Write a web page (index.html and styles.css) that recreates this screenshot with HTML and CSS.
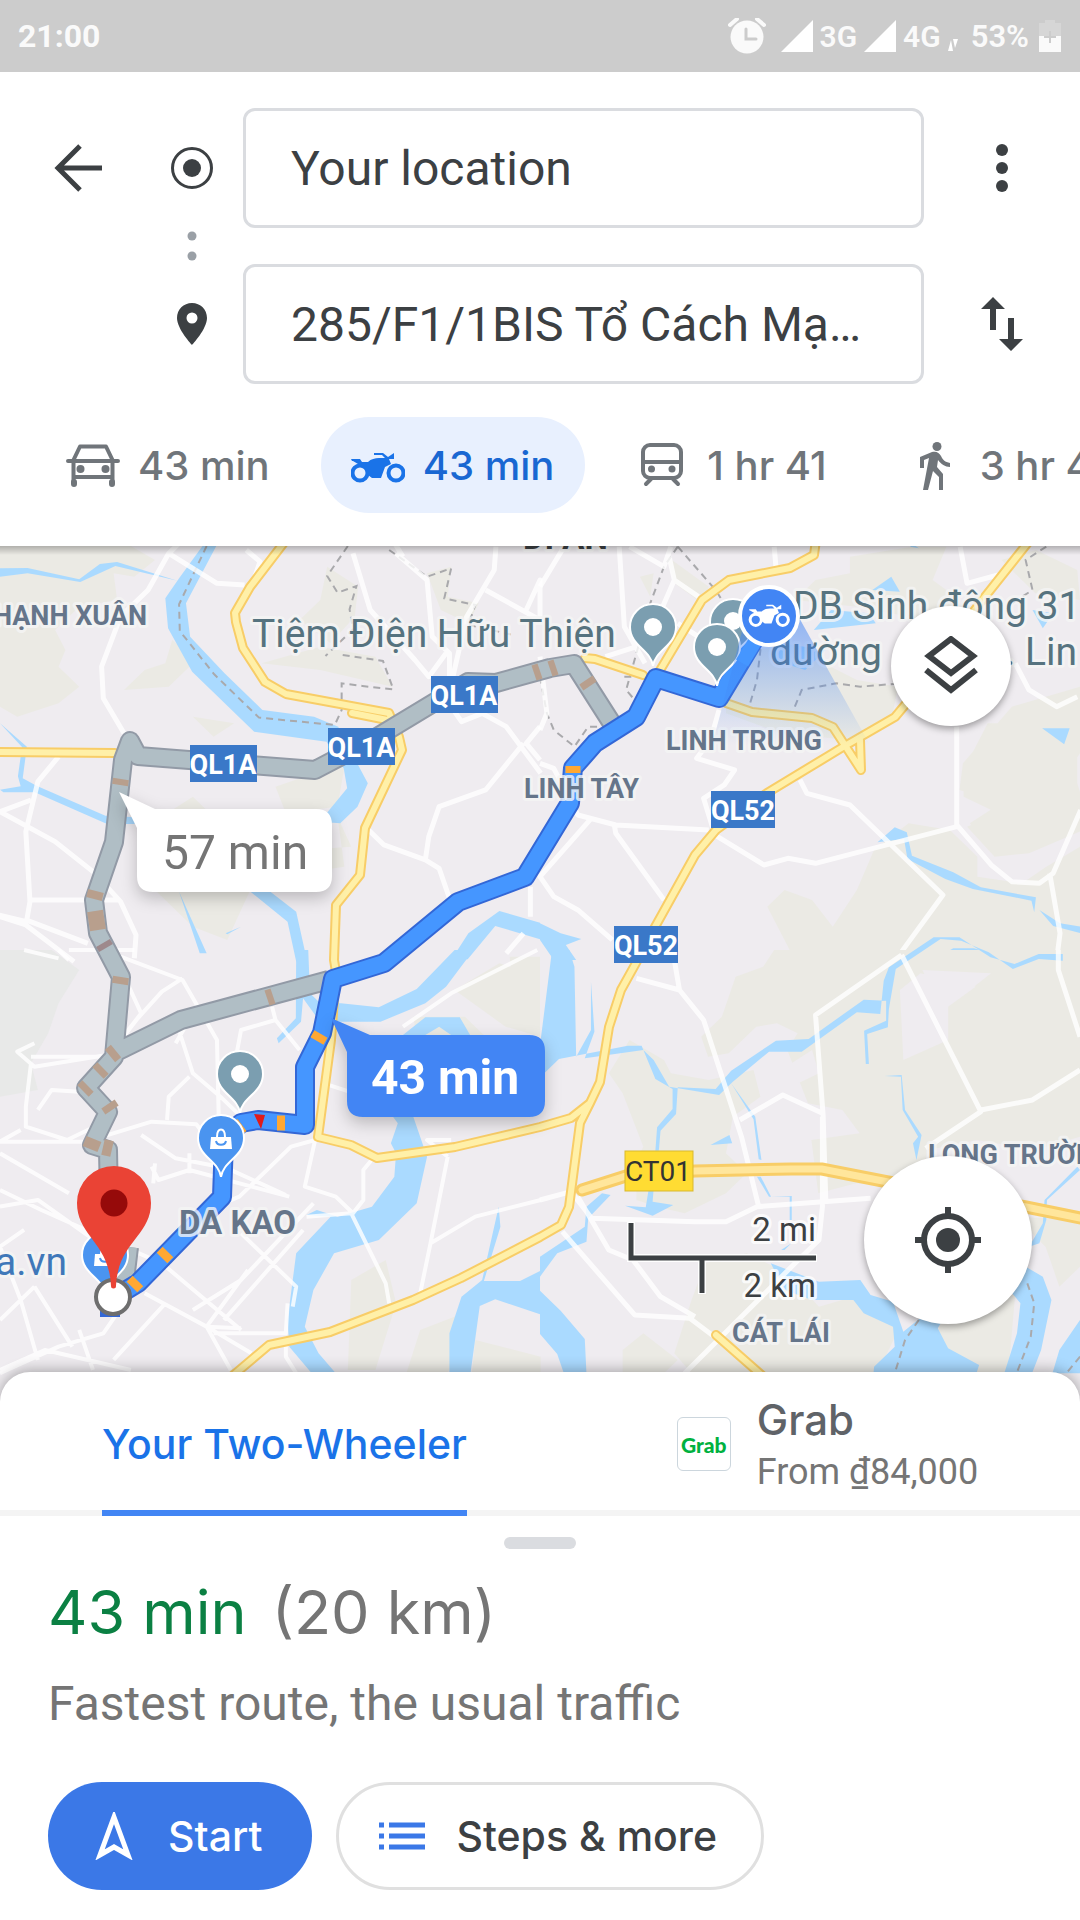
FILE: index.html
```html
<!DOCTYPE html>
<html lang="en">
<head>
<meta charset="utf-8">
<meta name="viewport" content="width=device-width, initial-scale=1">
<title>Directions</title>
<link rel="stylesheet" href="styles.css">
</head>
<body>
<div class="status">
  <span>21:00</span>
  <div class="status-icons">
    <svg class="alarm" width="38" height="36" viewBox="0 0 38 36" aria-hidden="true"><circle cx="19" cy="19" r="16.500" fill="#fafafa"/><path d="M2 7l7-6M36 7l-7-6" stroke="#fafafa" stroke-width="4" stroke-linecap="round"/><path d="M18 11v10h10" fill="none" stroke="#ccc" stroke-width="3" stroke-linecap="round"/></svg>
    <svg width="32" height="32" viewBox="0 0 32 32" aria-hidden="true"><path d="M0 32L32 0v32z" fill="#fff"/></svg>
    <span class="net">3G</span>
    <svg width="32" height="32" viewBox="0 0 32 32" aria-hidden="true"><path d="M0 32L32 0v32z" fill="#fff"/></svg>
    <span class="net">4G</span>
    <svg class="data" width="10" height="32" viewBox="0 0 10 32" aria-hidden="true"><path d="M0 31l3-11 2 11zM5 19h5l-3 9z" fill="#fff"/></svg>
    <span class="battery-level">53%</span>
    <svg width="22" height="32" viewBox="0 0 22 32" aria-hidden="true"><path d="M0 16V3h6V0h10v3h6v13z" fill="#d6d6d6"/><path d="M0 16h22v16H0z" fill="#fafafa"/><path d="M11 11v12M5 17h12" stroke="#ccc" stroke-width="2"/></svg>
  </div>
</div>

<header class="directions">
  <form class="waypoints">
    <button type="button" class="icon-button" aria-label="Back"><svg width="48" height="48" viewBox="0 0 48 48"><path d="M26 2L4 24l22 22M4 24h44" fill="none" stroke="#3c4043" stroke-width="5"/></svg></button>
    <svg class="mark" width="42" height="42" viewBox="0 0 42 42" aria-hidden="true"><circle cx="21" cy="21" r="19.500" fill="none" stroke="#3c4043" stroke-width="3"/><circle cx="21" cy="21" r="9" fill="#3c4043"/></svg>
    <input class="field" type="text" aria-label="Start" value="Your location">
    <button type="button" class="icon-button" aria-label="More options"><svg width="12" height="48" viewBox="0 0 12 48"><g fill="#3c4043"><circle cx="6" cy="6" r="6"/><circle cx="6" cy="24" r="6"/><circle cx="6" cy="42" r="6"/></g></svg></button>
    <svg class="dots" width="10" height="30" viewBox="0 0 10 30" aria-hidden="true"><g fill="#9aa0a6"><circle cx="5" cy="5" r="4.500"/><circle cx="5" cy="25" r="4.500"/></g></svg>
    <svg class="mark end" width="30" height="42" viewBox="0 0 30 42" aria-hidden="true"><path fill-rule="evenodd" fill="#3c4043" d="M15 0C6.500 0 0 6.500 0 15c0 11 15 27 15 27s15-16 15-27C30 6.500 23.500 0 15 0zm0 9.500a5.500 5.500 0 1 1 0 11 5.500 5.500 0 0 1 0-11z"/></svg>
    <input class="field destination" type="text" aria-label="Destination" value="285/F1/1BIS Tổ Cách Mạ…">
    <button type="button" class="icon-button swap" aria-label="Swap start and destination"><svg width="42" height="54" viewBox="0 0 42 54"><path d="M12 33V8M30 21v25" stroke="#3c4043" stroke-width="6"/><path d="M0 12L12 0l12 12zM18 42l12 12 12-12z" fill="#3c4043"/></svg></button>
  </form>
  <nav class="modes">
    <button type="button" class="mode"><svg width="54" height="54" viewBox="0 0 54 54" aria-hidden="true"><g fill="none" stroke="#70757a" stroke-width="4" stroke-linejoin="round" stroke-linecap="round"><path d="M2 23h50M7 23L14 8.500h26L47 23M7.500 23v22M46.500 23v22" /><path d="M8 39h38"/><path d="M8 44v2M46 44v2" stroke-width="6"/></g><circle cx="14.500" cy="31" r="4" fill="#70757a"/><circle cx="39.500" cy="31" r="4" fill="#70757a"/></svg>43 min</button>
    <button type="button" class="mode selected" aria-pressed="true"><svg width="54" height="54" viewBox="0 -14 54 54" aria-hidden="true"><use href="#moto"/></svg>43 min</button>
    <button type="button" class="mode"><svg width="54" height="54" viewBox="0 0 54 54" aria-hidden="true"><g fill="none" stroke="#70757a" stroke-width="4" stroke-linecap="round"><rect x="8" y="7" width="38" height="33" rx="7"/><path d="M8 24h38M16 41l-5 5M38 41l5 5"/></g><circle cx="16.500" cy="31" r="3.500" fill="#70757a"/><circle cx="37" cy="31" r="3.500" fill="#70757a"/></svg>1 hr 41</button>
    <button type="button" class="mode"><svg width="54" height="54" viewBox="0 0 54 54" aria-hidden="true"><circle cx="29" cy="8.500" r="4.500" fill="#70757a"/><path fill="#70757a" d="M24 14l-12 5v11h4v-8l5-2-6 32h5l5-19 6 6v13h4V36l-6-7 1-7c3 4 7 7 12 7v-4c-5-1-7-3-9-7-2-3-4-5-9-4z"/></svg>3 hr 45</button>
  </nav>
</header>

<main class="map">
  <svg class="canvas" viewBox="0 546 1080 860" preserveAspectRatio="xMidYMin slice" role="img" aria-label="Route map">
    <defs>
      <g id="moto" fill="currentColor"><g fill="none" stroke="currentColor" stroke-width="4"><circle cx="9" cy="21" r="7.500"/><circle cx="45" cy="21" r="7.500"/></g><path d="M0 7h9l2 3h6c3-3 7-4 11-4h6l-3-3h-8V1h9l5 4 6-4v6h-5l2 5-6 3-4 11h-9l-4-3-3-7-7-4-5-3H1z"/></g>
      <path id="pin" stroke="#fff" stroke-width="2" d="M0 38C-2 22-23 18-23-1a23 23 0 0 1 46 0C23 18 2 22 0 38z"/>
      <g id="bag"><path fill="#fff" d="M-10-2h20l1 12h-22z"/><path d="M-4-2c0-10 8-10 8 0" fill="none" stroke="#fff" stroke-width="2"/><path d="M-5 2c1 5 9 5 10 0" fill="none" stroke="#4a94f0" stroke-width="2"/></g>
      <linearGradient id="beam" x1="0" y1="0" x2="0" y2="1"><stop offset="0" stop-color="#4285f4" stop-opacity=".6"/><stop offset=".5" stop-color="#4285f4" stop-opacity=".3"/><stop offset="1" stop-color="#4285f4" stop-opacity="0"/></linearGradient>
      <linearGradient id="top-shade" x1="0" y1="0" x2="0" y2="1"><stop offset="0" stop-opacity=".25"/><stop offset="1" stop-opacity="0"/></linearGradient>
    </defs>
    <rect y="540" width="1080" height="880" fill="#efecf0"/>

    <!-- north west -->
    <g transform="translate(0 540) scale(.3444 .3333)">
      <path class="land" d="M0 0h350l100 60-60 50-60-10 10 80-110 20-70 70 30 60-20 50 60 60-60 50-120 40-50-30zM500 300l70 60-80 80-130 10 60-60 60-20zM950 80l-20 100-60 60 90 70 70-80 10-90zM760 370l170 20 210 50-50-90-160-30zM1240 100l70-20-10 90 90 20-30 60-80-40zM560 530l120 20-60 40zM800 740l140-50 60-10-20 120-150 20zM500 810l60-40 60 60 60-20 120 10-20 60-280 40zM400 1000l60-40 560-40-40-90 20 150-260 40-80 180-100-40z"/>
      <path class="water" d="M0 85l80-1 150 34 60-46 50-6 175 56-180-44-102 48-153-26-80 10zM588 18h40l-88 172 12 100 100 110 110 110 150 20 70 30 50 100 36 70-30 70-50 50-60-5 80-100-10-60-50-80-210-30-60-60-120-120-70-130-8-90 40-60zM0 550l78 70-12 95 40 22 200 90 90 5-5 20-80 0-210-95-91 0-10-8 60-10-8-30 12-88zM715 1045l70 10 75 60 32 150h-32l-25-120zM520 1055l80 185h-20zM655 1180l45-20-40 23zM1310 1260l50-80 90-67 118 35v50l-130-40-80 100z"/>
      <path class="dash" d="M600 18l-80 175 2 80 100 130 130 130 220 22 20-45v-80l60 8 90 10-30-85-130-20M1010 18l-60 90 30 50 55-20-20 70 10 60-80 80M1130 30l110 80 70-25-20 90 90 20-20 60 130 30"/>
      <path class="road" d="M530 0l-40 40-60 110-80 80-55 150 5 95 60 105M490 40l140 90 80 5M715 30l40 35-20 60M1025 40l50 170 130 150 40 50 50-70M1150 40l90 80 15 170 50 50 0 70M1440 20l-5 70-80 140-40 180M1140 0l30 50M1410 150l158 90 0-120-40 90M1310 500l30 45 60-25 70 40 100 140M1520 610l-110 140-135 50-30 90-10 70-120-45-50-50M1235 960l40 25 30 90M170 650l-60 75-35 150 12 210-10 60-80-20M0 815l90-35M0 815l160 90 110 90 80 90 45 100-5 70M87 1080h260M75 1140l180 70M0 1130l75 25 140 110M1568 560l-40 50 40 50M1540 1040v90M1520 1180l-50 60"/>
    </g>
    <!-- north east -->
    <g transform="translate(540 540) scale(.3444 .3333)">
      <path class="land" d="M900 50l180-30h100l-40 100 80 60-100 60-200-40-180-20 60-60 100-20zM290 110l40-10-10 70zM370 50l120 90-20 50-80-60zM540 380l40-50 150-10 190 100 120 20-20 100-120 60-200-20-160-60zM1370 500l198-60v200l-40 60 20 90-60 100-120 0-60 40-60-80 90-60-120-40 10-80zM1300 550h260v180l40 130-180 80-100 10-80-90 90-40-100-50v-80zM1568 920v340H740l-80-160 50-50 80 30 60 80 70-110 50-120 100-80 120 20 80 80v60l130 20 70-50z"/>
      <path class="land" d="M1340 60l100-30 120 60 8 90-130-20z"/>
      <path class="water" d="M965 150l55-40 25 45zM795 270l50-60 110 10 20 30zM1430 210l60 10-30 45zM1080 10l20 15-25-5zM700 310l130 20-60 60-90-30zM1458 565h80l-16 48zM980 907l50-45 35 15 15 70 120 50 80 45 160 30-5 45-8-35-170-35-80-30-110-60-10-60zM1450 1110l60 40 60 10v20l-80-22zM0 1150l60 30 60 17-45 18 30 45H40L0 1200zM1140 1260l60-35h60l120 35z"/>
      <path class="dash" d="M400 20l-40 60-40 110-40 150-30 110 50 60M400 20l110 130 90 150 40 30-10 90-20 70M0 410l20 110 20 50 60 50 40-60 70 0M740 500l20-50 100-20 70 10 120-10M1470 20l-60 40 20 90-60 40M300 410l-60 0"/>
      <path class="road" d="M70 20L0 140M230 20l15 240 60 110M260 20l100 60 20-60M375 50l15 70 70 50M390 120l-80 190-120 40M400 250l60 40M680 20l5 60M1220 20l20 110 90-25M0 670l40 15 70 140 110 30 270 15M145 840L0 1010l40 60 70 40 100 90M215 850l5 30 140 200M500 880l150 95 70-20 80 15 410-110 0-300M755 720l20 40 125 35 270 270-120 170-50 60M1210 855l100 120 60 50 80 5 40-30 80-190M1480 1000l30 180-10 80M520 510l-25 90-40 55 110 35-30 45-60 40 30 100M1380 370l40 80 80 50 60-30M0 350l20 170-20 50"/>
    </g>
    <!-- south west -->
    <g transform="translate(0 950) scale(.3444 .3333)">
      <path fill="#e8e9e8" d="M0 0h150l80 60-60 100-30 90-50 90 20 80-110 20z"/>
      <path class="land" d="M1320 120l130-80 118 40v180l-100-30zM1480 20h88v130l-80-20zM1020 990l100-60 30 130-60 200h-80zM1220 1140l150-60-70 190h-120zM1380 1170l190 50v50h-200zM1200 200l150 0 60 60h-200z"/>
      <path class="water" d="M860 0h35l5 130 30 30 60 0 110 12 110-55 110-117h55l-80 110-60 50-130 55h-120l-70-20-35-50-6 70-65 65-5-15 55-60zM1170 255l65-53h100l30 53h-55l-35-25-40 25zM1130 500h70l40 120-30 140-110 110-130 40-60 110-25 110 40 80 50 60h-70l-65-80-5-80 25-200 100-110-70-5 30-15 60 20 100-30 65-90 5-70-15-30 20-60-50-70zM1448 770l5 60-48 163h105l58-30v130l-130-45-45 20-28 210h-60V1150l35-110 60-50z"/>
      <path class="road street" d="M100 280l-50 25 50 45 210-35M90 320l200 0M70 0l100 25M170 0l30 30M350 20l180 70 100 180 5 230M530 85l-60 40-70 80-90 120M370 100l40 90-60 80M510 210l50 160 80 70 60 60M510 280l45-80M790 170l10 40-100 30-20 110M800 210l70 90M550 380l-60 60-5 70M90 340l-15 130 0 60 120 40 100-50M60 540L0 575h250l190-60 130 8 60 80M110 480l40-60 80 5M200 0l190 0M410 555l100 70 150 30 170 80M440 650l20 40 90-30 290 80M550 610l0 60M450 640l-5 60M0 610l200 120M0 720l120 60 130 60 220 100 230 200M70 840L0 890l60 160 50 180M0 770l110-20 150 110M100 1010L0 1110M100 1010l110 180M420 1030l180 100 130 80M560 1080l140-90 210-230M480 1060L330 1230M400 1000l-100 150-130 40-170 80M0 1260l130-60 250 60M230 1140l40 120M720 960L600 1130l70 130M600 1130l100 5M620 1150h210l5-90M915 570l-30 140 90 30 50 50 30-40v-90l40-50M890 800l130-10 100 210 10 60M880 840L650 1110M1300 620l-50 260 130-80 190-50M1300 620l-60-50 70 0M1250 880l-30 150M830 1160v60l30 50M915 570l-70 20-150 150-140 60M1560 0l-250 130-140 100M940 400l90 30M700 850l160 160-10 60"/>
    </g>
    <!-- south east -->
    <g transform="translate(540 950) scale(.3444 .3333)">
      <path class="land" d="M680 0h888v560l-130 40-170-30-140 30-30 110-180-10-110 30-20-160 140-20-50-70-100-20-60-160 30-50-60-30-60 10-80 80-60 10-20-60 60-60 40-120 80-30zM200 370l60-100 100 60 20 40 110 20 130-30 20 80-80 60-20 110 60 60-60 60-120 60-80-20-60-20v-120l20-40-60-160zM480 940l120-30 120 60 90 100 100-30 130 100-60 130H440l-50-60 50-160zM240 1200l60-50 100 80-40 40H240zM1380 800l188 10v140l-60 60-40-120zM1160 1120l220-90-20 240H1150z"/>
      <path fill="#efecf0" d="M1045 120l60-50 160 40-80 60v100l-130 60zM1110 60l200 10-50 40-120 10zM730 340l60-40 20 70-60 30z"/>
      <path class="water" d="M35 0h50l15 50 5 270 43-80v-145l10 150-28 80 170-25 30 30 45 80 145 25 40-40 105-90h95l160-118 68 5 10-100 15-40 130-90h75l90 60 70 20 70-30h70v20l-70-5-75 30-70-50-80-35-60-5-130 90-20 120-3 55-60 20 5 90h-9l-5-100 64-30v-60l-65-3-160 118-95 5-130 90-45 55-110-5-5 80-45 50-5 60h-10l5-70 45-55 0-60-50-30-40-100-40 0-200 40-50 50-50 20 40-70zM555 400l70 100 18 130-8-2-15-120zM495 585l55-30 8 25zM320 690h12l-5 65 60 10-60 32-80-30 60 5zM180 730l25 5-65 70-5 70-85 35-50 70v-60l130-90 5-60zM630 680l35 60h60v70h6v-72l-60 2-30-60zM1000 378l50-3 10 105 48 75-15 75-10-50 15-20-45-80-5-100zM0 1022l60 60 70 85 5 105H70l-20-60-50-60zM670 940l140 55 120-5 30 45 65 20 30 90 60-50 80-30-40 70 30 60 90 50-20 65H965l5-60 60-60-5-60-85-40-30-40-120 0-80-30zM700 900l30-20-20 20zM1410 950l50 30 25 70-30 150-30 80h-80l40-130 10-90-40-50zM1560 650l-95 100-5 70-40 70 30-10 20-70 2-60 96-90zM1568 1110l-60 90-20 70h80z"/>
      <path class="dash" d="M1100 1110l-40 60-30 100M1415 1000l20 60-10 100-45 120M1568 1220l-40 50"/>
      <path class="road" d="M280 85l125 35-15-90M405 120l70 90 110 350 50 210M580 510l125-75 115 55M1050 15l-250 180 22 300 8 260M1050 15l230 470-160 110M1280 480l150-30 138-90M1505 0l0 60 63 200M820 500v270l-10 100-60 60-330 340M0 750l90-25 60 80 300 10h90l90-45 330-25M110 740l90 160 70 30 80 110 100 60M65 845l210 250 160 10 90 70"/>
    </g>

    <path class="highway-edge" d="M286 540L250 587 235 613 236 622 243 648 265 682 286 694 389 713 399 737 402 750 365 828 360 875 336 905 334 960 336 972 331 1040 318 1137 351 1145 377 1158 455 1147 540 1127 571 1118 590 1103M352 713l35 7M0 752l115 1M1030 540L980 603 905 705 895 717 843 747 767 793 716 830 695 855 655 927 636 963 621 990 609 1027 600 1082 590 1103 580 1123 569 1207 561 1225 540 1237 461 1278 413 1300 330 1332 269 1345 230 1378M816 540l-2 15-24 13-61 12-27 20-43 72-5 10M585 658l10 1 48 16M726 703l26 9 60 6 21 9 28 43-1-30M716 1335l50 44"/>
    <path class="highway" d="M286 540L250 587 235 613 236 622 243 648 265 682 286 694 389 713 399 737 402 750 365 828 360 875 336 905 334 960 336 972 331 1040 318 1137 351 1145 377 1158 455 1147 540 1127 571 1118 590 1103M352 713l35 7M0 752l115 1M1030 540L980 603 905 705 895 717 843 747 767 793 716 830 695 855 655 927 636 963 621 990 609 1027 600 1082 590 1103 580 1123 569 1207 561 1225 540 1237 461 1278 413 1300 330 1332 269 1345 230 1378M816 540l-2 15-24 13-61 12-27 20-43 72-5 10M585 658l10 1 48 16M726 703l26 9 60 6 21 9 28 43-1-30M716 1335l50 44"/>
    <path fill="none" stroke="#f8cd67" stroke-width="13" stroke-linecap="round" d="M582 1190l44-14 69-5 96-2h31l66 13 138 25 54 11"/>
    <path fill="none" stroke="#ffe69c" stroke-width="7" stroke-linecap="round" d="M582 1190l44-14 69-5 96-2h31l66 13 138 25 54 11"/>

    <g fill="none" stroke-linejoin="round">
      <path stroke="#929aa6" stroke-width="20" d="M611 722L574 664 550 668 496 683 468 682 372 740 315 770 138 756 130 741 123 760 114 842 94 900 98 933 121 977 114 1057 86 1088 108 1112 92 1145 108 1150 109 1200M329 980L181 1020 114 1053M129 1247l-3 25-12 20"/>
      <path stroke="#b0bec5" stroke-width="16" d="M611 722L574 664 550 668 496 683 468 682 372 740 315 770 138 756 130 741 123 760 114 842 94 900 98 933 121 977 114 1057 86 1088 108 1112 92 1145 108 1150 109 1200M329 980L181 1020 114 1053M129 1247l-3 25-12 20"/>
      <path stroke="#b89f8d" stroke-width="16" d="M121 779l-1 6M96 891l-2 8M95 911l3 19M121 977l-1 7M267 998l6-2M116 1051l-6 5M103 1068l-5 5M88 1086l-5 5M108 1104l4 6M94 1139l-4 10M103 1147l9 2M586 680l4 6M534 673l6-2M550 669l6-2"/>
      <path stroke="#9e898c" stroke-width="16" d="M103 943l3 5"/>
      <path stroke="#3367d6" stroke-width="20" d="M769 615L719 698 656 678 636 717 595 743 573 768 570 803 525 877 458 902 384 963 333 979 322 1033 305 1067 305 1125 258 1120 241 1123 224 1140 222 1197 138 1283 110 1300v17"/>
      <path stroke="#4596ff" stroke-width="16" d="M769 615L719 698 656 678 636 717 595 743 573 768 570 803 525 877 458 902 384 963 333 979 322 1033 305 1067 305 1125 258 1120 241 1123 224 1140 222 1197 138 1283 110 1300"/>
      <path stroke="#ffa833" stroke-width="15" d="M573 766v7M321 1034l-4 7M277 1123h8M168 1252l-6 6M138 1281l-6 6M238 1128l4-3"/>
    </g>
    <path fill="#e01b1b" d="M254 1114l11 1-4 14z"/>

    <g class="shield" text-anchor="middle">
      <rect x="190" y="745" width="67" height="37"/><text x="223" y="774">QL1A</text>
      <rect x="328" y="728" width="67" height="37"/><text x="361" y="757">QL1A</text>
      <rect x="431" y="676" width="67" height="37"/><text x="464" y="705">QL1A</text>
      <rect x="711" y="791" width="64" height="37"/><text x="743" y="820">QL52</text>
      <rect x="614" y="926" width="64" height="37"/><text x="646" y="955">QL52</text>
    </g>
    <rect x="625" y="1151" width="68" height="40" fill="#ffdc33" stroke="#d9b92e"/>
    <text class="toll" x="658" y="1181" text-anchor="middle">CT01</text>

    <g class="district">
      <text x="147" y="625" text-anchor="end">THẠNH XUÂN</text>
      <text x="666" y="750">LINH TRUNG</text>
      <text x="524" y="798">LINH TÂY</text>
      <text x="928" y="1164">LONG TRƯỜNG</text>
      <text x="732" y="1342">CÁT LÁI</text>
      <text class="large" x="179" y="1234">DA KAO</text>
      <text class="large city" x="523" y="549">DĨ AN</text>
    </g>
    <g class="poi">
      <text x="252" y="647">Tiệm Điện Hữu Thiện</text>
      <text x="793" y="619">DB Sinh động 31</text>
      <text x="770" y="665">dường</text>
      <text x="1005" y="665">. Lin</text>
      <text class="shop" x="67" y="1275" text-anchor="end">a.vn</text>
    </g>

    <g fill="#7b9eb0">
      <use href="#pin" x="733" y="623"/><circle cx="733" cy="621" r="9" fill="#fff"/>
      <use href="#pin" x="717" y="648"/><circle cx="717" cy="647" r="9" fill="#fff"/>
      <use href="#pin" x="653" y="628"/><circle cx="653" cy="627" r="9" fill="#fff"/>
      <use href="#pin" x="240" y="1075"/><circle cx="240" cy="1074" r="9" fill="#fff"/>
    </g>
    <g fill="#4a94f0"><use href="#pin" x="221" y="1139"/><use href="#pin" x="105" y="1256"/></g>
    <use href="#bag" x="221" y="1139"/><use href="#bag" x="105" y="1256"/>
    <path fill="url(#beam)" d="M745 620L712 745h158L792 605z"/>
    <path fill="none" stroke="#4596ff" stroke-width="14" d="M765 625L742 663"/>
    <circle cx="769" cy="616" r="29" fill="#4285f4" stroke="#fff" stroke-width="4"/>
    <g color="#fff" transform="translate(749 604) scale(.750)"><use href="#moto"/></g>

    <circle cx="113" cy="1297" r="17" fill="#fff" stroke="#6e6e6e" stroke-width="4"/>
    <path fill="#ea4335" d="M111 1286c-2-44-34-50-34-83a37 37 0 0 1 74 0c0 33-33 39-35 83a2 2 0 0 1-5 0z"/>
    <circle cx="114" cy="1203" r="13.500" fill="#960a0a"/>

    <g class="callout"><path fill="#fff" d="M119 792l36 17h161q16 0 16 16v51q0 16-16 16H153q-16 0-16-16v-48z"/><text x="162" y="869" fill="#757575">57 min</text></g>
    <g class="callout"><path fill="#4285f4" d="M331 1018l39 17h159q16 0 16 16v50q0 16-16 16H363q-16 0-16-16v-49z"/><text class="strong" x="371" y="1094" fill="#fff">43 min</text></g>

    <path fill="none" stroke="#fff" stroke-width="8" d="M631 1222v36h186M702 1258v36"/>
    <path fill="none" stroke="#3c4043" stroke-width="5" d="M631 1223v35h185M702 1258v35"/>
    <g class="scale" text-anchor="end"><text x="816" y="1241">2 mi</text><text x="816" y="1297">2 km</text></g>
    <rect y="546" width="1080" height="9" fill="url(#top-shade)"/>
  </svg>
  <button type="button" class="round layers" aria-label="Layers"><svg width="54" height="60" viewBox="0 0 54 60"><path d="M27 3L49 20 27 37 5 20zM2 34l25 20 25-20" fill="none" stroke="#3c4043" stroke-width="6"/></svg></button>
  <button type="button" class="round locate" aria-label="Show my location"><svg width="66" height="66" viewBox="0 0 66 66"><circle cx="33" cy="33" r="24" fill="none" stroke="#3c4043" stroke-width="6"/><circle cx="33" cy="33" r="12" fill="#3c4043"/><path d="M33 0v9M33 57v9M0 33h9M57 33h9" stroke="#3c4043" stroke-width="6"/></svg></button>
</main>

<section class="sheet">
  <div class="options">
    <button type="button" class="option own"><span>Your Two-Wheeler</span></button>
    <button type="button" class="option ride">
      <span class="brand">Grab</span>
      <span class="offer"><span class="name">Grab</span><span class="price">From ₫84,000</span></span>
    </button>
  </div>
  <div class="handle"></div>
  <div class="summary">
    <h1><span class="time">43 min</span> (20 km)</h1>
    <p>Fastest route, the usual traffic</p>
    <div class="actions">
      <button type="button" class="action start"><svg width="40" height="48" viewBox="0 0 40 48" aria-hidden="true"><path d="M20 5L34 43l-14-8-14 8z" fill="none" stroke="#fff" stroke-width="5"/></svg>Start</button>
      <button type="button" class="action steps"><svg width="46" height="30" viewBox="0 0 46 30" aria-hidden="true"><path d="M10 4h36M10 15h36M10 26h36M0 4h5M0 15h5M0 26h5" stroke="#3b78e7" stroke-width="5"/></svg>Steps &amp; more</button>
    </div>
  </div>
</section>
</body>
</html>
```
FILE: styles.css
```css
* { box-sizing: border-box; }

body {
  margin: 0;
  min-height: 100vh;
  display: flex;
  flex-direction: column;
  background: #fff;
  color: #3c4043;
  font-family: Roboto, "Noto Sans", sans-serif;
  overflow-x: hidden;
}

button {
  margin: 0;
  padding: 0;
  border: 0;
  background: none;
  color: inherit;
  font: inherit;
}

svg { display: block; flex-shrink: 0; }

/* Status bar */
.status {
  display: flex;
  align-items: center;
  justify-content: space-between;
  height: 72px;
  padding: 0 19px 0 18px;
  background: #ccc;
  color: #fafafa;
  font-size: 32px;
  font-weight: 700;
}
.status-icons { display: flex; align-items: center; gap: 7px; }
.alarm { margin-right: 8px; }
.net { font-size: 30px; font-weight: 600; }
.data { margin-right: 6px; }
.battery-level { margin-right: 3px; font-size: 31px; font-weight: 600; }

/* Start and destination */
.directions { padding: 36px 0 33px; }
.waypoints {
  display: grid;
  grid-template-columns: 156px 72px 1fr 156px;
  grid-template-rows: 120px 36px 120px;
  align-items: center;
  justify-items: center;
}
.icon-button { display: grid; place-items: center; width: 72px; height: 72px; }
.dots { grid-area: 2 / 2; }
.end { grid-area: 3 / 2; }
.destination { grid-area: 3 / 3; }
.swap { grid-area: 3 / 4; }
.field {
  width: calc(100% - 15px);
  height: 120px;
  justify-self: end;
  padding: 0 45px;
  border: 3px solid #dadce0;
  border-radius: 12px;
  background: #fff;
  color: #3c4043;
  font: 400 48px Roboto, sans-serif;
  text-overflow: ellipsis;
}

/* Travel modes */
.modes {
  display: flex;
  gap: 20px;
  margin-top: 33px;
  padding-left: 36px;
  overflow: hidden;
}
.mode {
  display: flex;
  align-items: center;
  gap: 18px;
  flex-shrink: 0;
  height: 96px;
  padding: 0 31px 0 30px;
  border-radius: 48px;
  color: #70757a;
  font: 500 40px Inter, sans-serif;
}
.mode.selected { background: #e8f0fe; color: #1967d2; }
.mode.selected svg { color: #1a73e8; }

/* Map */
.map {
  position: relative;
  flex: 1;
  min-height: 480px;
  overflow: hidden;
  background: #efecf0;
}
.canvas { position: absolute; inset: 0; width: 100%; height: 100%; }
.canvas path { vector-effect: non-scaling-stroke; }
.land { fill: #ebeae4; }
.water { fill: #aadaff; }
.road { fill: none; stroke: #fff; stroke-width: 5px; stroke-opacity: .8; stroke-linejoin: round; }
.street { stroke-width: 4px; }
.dash { fill: none; stroke: #a9a9ac; stroke-width: 2px; stroke-dasharray: 7 5; }
.highway-edge { fill: none; stroke: #f8cd67; stroke-width: 10px; stroke-linejoin: round; stroke-linecap: round; }
.highway { fill: none; stroke: #fff0a8; stroke-width: 6px; stroke-linejoin: round; stroke-linecap: round; }
.shield rect { fill: #3a78c8; }
.shield text { fill: #fff; font-size: 27px; font-weight: 700; }
.toll { fill: #333; font-size: 28px; }
.district text, .poi text, .scale text {
  stroke: #f5f5f5;
  stroke-width: 6px;
  stroke-opacity: .8;
  stroke-linejoin: round;
  paint-order: stroke;
}
.district text { fill: #65758a; font-size: 27px; font-weight: 700; }
.district .large { font-size: 33px; }
.district .city { fill: #3c4043; }
.poi text { fill: #56737f; font-size: 39px; }
.poi .shop { fill: #3f78b9; }
.scale text { fill: #3c4043; font-size: 33px; stroke: #fff; }
.callout { filter: drop-shadow(0 6px 8px rgba(0, 0, 0, .22)); }
.callout text { font-size: 48px; }
.callout .strong { font-weight: 700; }

.round {
  position: absolute;
  display: grid;
  place-items: center;
  border-radius: 50%;
  background: #fff;
  box-shadow: 0 3px 7px rgba(0, 0, 0, .35);
}
.layers { top: 60px; right: 69px; width: 120px; height: 120px; }
.locate { right: 48px; bottom: 78px; width: 168px; height: 168px; }

/* Bottom sheet */
.sheet {
  position: relative;
  margin-top: -30px;
  border-radius: 30px 30px 0 0;
  background: #fff;
  box-shadow: 0 -2px 14px rgba(0, 0, 0, .3);
}
.options {
  display: grid;
  grid-template-columns: 569fr 511fr;
  height: 144px;
  border-bottom: 6px solid #f4f4f4;
}
.option {
  display: flex;
  align-items: center;
  justify-content: center;
  gap: 26px;
}
.own {
  height: 144px;
  color: #1a73e8;
  font: 500 41px Inter, sans-serif;
}
.own span {
  height: 144px;
  border-bottom: 6px solid #4285f4;
  border-radius: 4px 4px 0 0;
  line-height: 144px;
}
.ride { padding-left: 6px; }
.brand {
  display: grid;
  place-items: center;
  width: 54px;
  height: 54px;
  border: 1px solid #ccd6dd;
  border-radius: 6px;
  color: #00b140;
  font: 900 21px Lato, sans-serif;
}
.offer { display: grid; padding-top: 8px; text-align: left; }
.name { color: #5f6368; font: 500 42px/48px Inter, sans-serif; }
.price { color: #757575; font-size: 36px; line-height: 56px; }
.handle {
  width: 72px;
  height: 12px;
  margin: 21px auto 0;
  border-radius: 6px;
  background: #dadce0;
}
.summary { padding: 23px 48px 30px; color: #757575; }
h1 { margin: 0; font: 400 61px/80px Inter, sans-serif; }
.time { margin-right: 8px; color: #0b8043; }
p { margin: 22px 0 0; font-size: 48px; line-height: 60px; }
.actions { display: flex; gap: 24px; margin-top: 48px; }
.action {
  display: flex;
  align-items: center;
  height: 108px;
  border-radius: 54px;
  font: 500 41px Inter, sans-serif;
}
.start { gap: 34px; padding: 0 50px 0 46px; background: #3b78e7; color: #fff; }
.steps { gap: 31px; padding: 0 44px 0 40px; border: 3px solid #e0e0e0; color: #3c4043; }
```
